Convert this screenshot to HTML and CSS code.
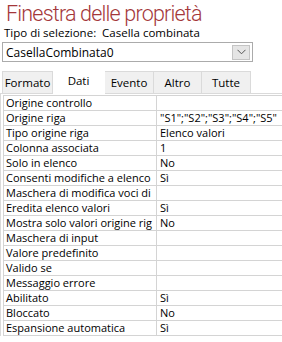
FILE: index.html
```html
<!DOCTYPE html>
<html>
<head>
	<meta charset="UTF-8">
	<title>Finestra delle proprietà</title>
	<link rel="stylesheet" href="styles.css">
</head>
<body>
	<div class="sheet">
		<h1 class="title">Finestra delle proprietà</h1>
		<div class="seltype">Tipo di selezione:&nbsp; Casella combinata</div>
		<div class="combo">
			<span class="combo-text">CasellaCombinata0</span>
			<span class="combo-btn">
				<svg width="9" height="6" viewBox="0 0 9 6"><path d="M0.5 0.8 L4.5 4.8 L8.5 0.8" fill="none" stroke="#555" stroke-width="1"/></svg>
			</span>
		</div>
		<ul class="tabs">
			<li class="tab tab-formato">Formato</li>
			<li class="tab tab-dati active">Dati</li>
			<li class="tab tab-evento">Evento</li>
			<li class="tab tab-altro">Altro</li>
			<li class="tab tab-tutte">Tutte</li>
		</ul>
		<div class="panel">
			<table class="props">
				<tr><td class="name">Origine controllo</td><td class="val"></td></tr>
				<tr><td class="name">Origine riga</td><td class="val">"S1";"S2";"S3";"S4";"S5"</td></tr>
				<tr><td class="name">Tipo origine riga</td><td class="val">Elenco valori</td></tr>
				<tr><td class="name">Colonna associata</td><td class="val">1</td></tr>
				<tr><td class="name">Solo in elenco</td><td class="val">No</td></tr>
				<tr><td class="name">Consenti modifiche a elenco</td><td class="val">Sì</td></tr>
				<tr><td class="name">Maschera di modifica voci di</td><td class="val"></td></tr>
				<tr><td class="name">Eredita elenco valori</td><td class="val">Sì</td></tr>
				<tr><td class="name">Mostra solo valori origine rig</td><td class="val">No</td></tr>
				<tr><td class="name">Maschera di input</td><td class="val"></td></tr>
				<tr><td class="name">Valore predefinito</td><td class="val"></td></tr>
				<tr><td class="name">Valido se</td><td class="val"></td></tr>
				<tr><td class="name">Messaggio errore</td><td class="val"></td></tr>
				<tr><td class="name">Abilitato</td><td class="val">Sì</td></tr>
				<tr><td class="name">Bloccato</td><td class="val">No</td></tr>
				<tr><td class="name">Espansione automatica</td><td class="val">Sì</td></tr>
			</table>
		</div>
	</div>
</body>
</html>
```

FILE: styles.css
```css
body,div,ul,li,h1,table,td{
	margin: 0;
	padding: 0;
}
body{
	background: #fff;
	color: #000;
	font-family: "Open Sans", "Noto Sans", sans-serif;
	font-size: 11px;
	overflow: hidden;
}
li{
	list-style: none;
}
.sheet{
	width: 282px;
	height: 342px;
	overflow: hidden;
}
.title{
	font-family: Roboto, "Open Sans", sans-serif;
	font-size: 21.5px;
	font-weight: 300;
	line-height: 25px;
	letter-spacing: -0.8px;
	color: #a4373a;
	padding: 1px 0 0 6px;
	white-space: nowrap;
}
.seltype{
	font-size: 11.5px;
	line-height: 14px;
	padding-left: 4px;
}
.combo{
	display: flex;
	align-items: center;
	justify-content: space-between;
	width: 249px;
	height: 18px;
	margin: 2px 0 0 2px;
	border: 1px solid #ababab;
	font-size: 12px;
}
.combo-text{
	padding-left: 3px;
}
.combo-btn{
	display: flex;
	align-items: center;
	justify-content: center;
	width: 16px;
	height: 13px;
	margin-right: 2px;
	background: #e5e5e5;
	border: 1px solid #c4c4c4;
}
.tabs{
	display: flex;
	align-items: flex-end;
	margin: 8px 0 0 2px;
	height: 23px;
}
.tab{
	height: 21px;
	line-height: 21px;
	background: #f0f0f0;
	border: 1px solid #dadada;
	border-bottom: none;
	border-left: none;
	text-align: center;
	font-size: 11.5px;
}
.tab-formato{
	width: 49px;
	border-left: 1px solid #dadada;
}
.tab-dati{
	width: 51px;
}
.tab-evento{
	width: 48px;
}
.tab-altro{
	width: 47px;
}
.tab-tutte{
	width: 48px;
}
.tab.active{
	background: #fff;
	height: 23px;
	line-height: 19px;
	margin-bottom: -1px;
	position: relative;
	border-color: #fff;
}
.panel{
	border-top: 1px solid #dadada;
	border-left: 1px solid #dadada;
	padding: 1px 0 0 2px;
}
.props{
	border-collapse: collapse;
	table-layout: fixed;
	width: 300px;
}
.props td{
	height: 14px;
	line-height: 14px;
	border: 1px solid #d4d4d4;
	white-space: nowrap;
	overflow: hidden;
	padding: 0 2px;
}
.props .name{
	width: 148px;
}
.props .val{
	padding-left: 3px;
}
```
